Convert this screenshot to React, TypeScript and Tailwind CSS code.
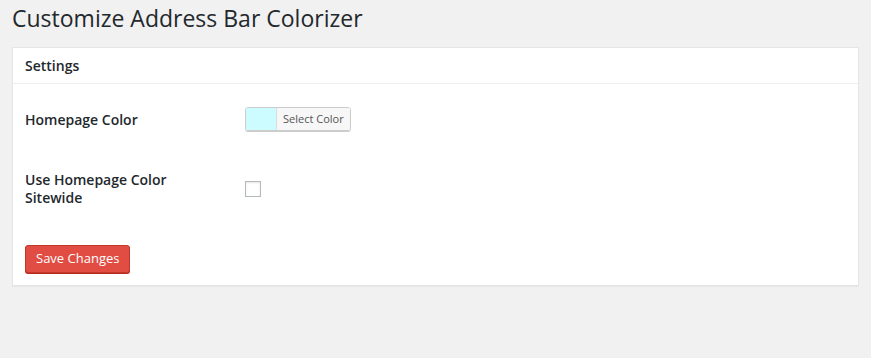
import React from 'react';

const App: React.FC = () => {
  return (
    <div className="min-h-[358px] w-full bg-[#f1f1f1] px-3 font-['Open_Sans',sans-serif] text-[#23282d]">
      <h1 className="pt-[4px] text-[23px] leading-[29px] font-normal">Customize Address Bar Colorizer</h1>

      <div className="mt-[14px] border border-[#e5e5e5] bg-white shadow-[0_1px_1px_rgba(0,0,0,0.04)]">
        <div className="flex h-[36px] items-center border-b border-[#eeeeee] px-3">
          <h2 className="text-[14px] font-semibold">Settings</h2>
        </div>

        <div className="px-3 pb-[12px]">
          {/* homepage color */}
          <div className="mt-[23px] flex h-[24px] items-center">
            <div className="w-[220px] pt-[2px] text-[14px] leading-[18px] font-semibold">Homepage Color</div>
            <div className="flex h-[24px] overflow-hidden rounded-[3px] border border-[#cccccc] shadow-[0_1px_0_#cccccc]">
              <span className="w-[30px] bg-[#ccfcff]" />
              <span className="flex items-center border-l border-[#dddddd] bg-[#f7f7f7] px-[6px] text-[11px] text-[#555555]">
                Select Color
              </span>
            </div>
          </div>

          {/* sitewide */}
          <div className="mt-[40px] flex items-center">
            <div className="w-[220px] pr-[30px] text-[14px] leading-[18px] font-semibold">
              Use Homepage Color Sitewide
            </div>
            <span className="h-[16px] w-[16px] border border-[#b4b9be] bg-white shadow-[inset_0_1px_2px_rgba(0,0,0,0.1)]" />
          </div>

          <button className="mt-[38px] h-[28px] rounded-[3px] border border-[#c0392b] bg-[#e14d43] px-[10px] text-[13px] text-white shadow-[0_1px_0_#ba281e]">
            Save Changes
          </button>
        </div>
      </div>
    </div>
  );
};

export default App;
